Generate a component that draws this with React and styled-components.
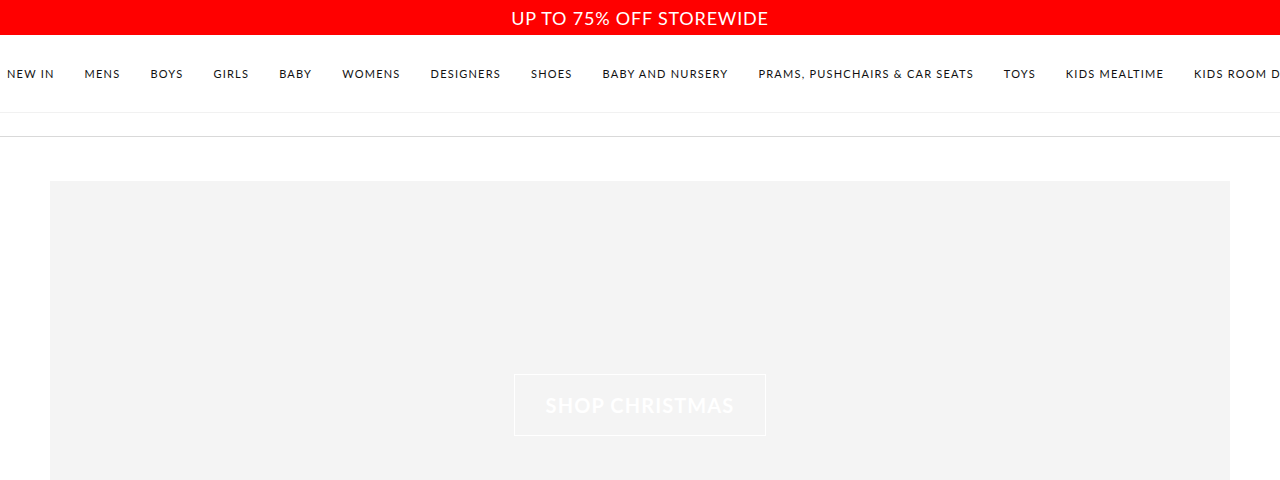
import React from 'react';
import styled, { createGlobalStyle } from 'styled-components';

const GlobalStyle = createGlobalStyle`
  body {
    margin: 0;
    background: #fff;
    font-family: Lato, "Liberation Sans", sans-serif;
    overflow: hidden;
  }
`;

const PromoBar = styled.div`
  height: 35px;
  background: #ff0000;
  color: #fff;
  display: flex;
  align-items: center;
  justify-content: center;
  font-size: 18px;
  letter-spacing: 0.8px;
`;

const Nav = styled.nav`
  height: 77px;
  border-bottom: 1px solid #f1f1f1;
  display: flex;
  align-items: center;
  gap: 30px;
  padding-left: 7px;
  white-space: nowrap;
  overflow: hidden;
`;

const NavItem = styled.a`
  font-size: 11px;
  letter-spacing: 1.22px;
  color: #111;
  text-decoration: none;
  flex-shrink: 0;
`;

const SubBar = styled.div`
  height: 23px;
  border-bottom: 1px solid #d9d9d9;
`;

const Main = styled.main`
  padding: 44px 50px 0;
`;

const Hero = styled.section`
  background: #f4f4f4;
  min-height: 520px;
  display: flex;
  justify-content: center;
  align-items: flex-start;
  padding-top: 193px;
  box-sizing: border-box;
`;

const HeroButton = styled.a`
  width: 252px;
  height: 62px;
  box-sizing: border-box;
  border: 1px solid #fff;
  color: #fff;
  display: flex;
  align-items: center;
  justify-content: center;
  font-size: 20px;
  font-weight: 700;
  letter-spacing: 1.1px;
  text-decoration: none;
`;

const links = [
  'NEW IN', 'MENS', 'BOYS', 'GIRLS', 'BABY', 'WOMENS', 'DESIGNERS', 'SHOES',
  'BABY AND NURSERY', 'PRAMS, PUSHCHAIRS & CAR SEATS', 'TOYS', 'KIDS MEALTIME',
  'KIDS ROOM DECOR',
];

export default function App() {
  return (
    <>
      <GlobalStyle />
      <PromoBar>UP TO 75% OFF STOREWIDE</PromoBar>
      <Nav>
        {links.map((l) => (
          <NavItem key={l} href="#">{l}</NavItem>
        ))}
      </Nav>
      <SubBar />
      <Main>
        <Hero>
          <HeroButton href="#">SHOP CHRISTMAS</HeroButton>
        </Hero>
      </Main>
    </>
  );
}
